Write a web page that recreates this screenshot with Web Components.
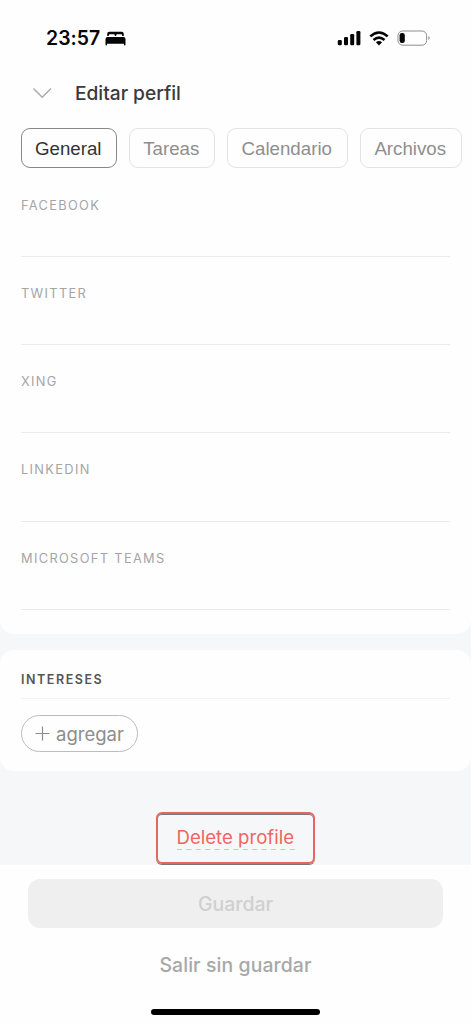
<!DOCTYPE html>
<html lang="es"><head><meta charset="utf-8"><title>Editar perfil</title>
<style>html,body{margin:0;height:100%;background:#fefefe}body{font-family:Inter,"Liberation Sans",sans-serif;overflow:hidden}</style></head>
<body><profile-page></profile-page>
<script>
const define = (name, html) => customElements.define(name, class extends HTMLElement {
  constructor(){ super(); const t=document.createElement('template'); t.innerHTML=html; this.attachShadow({mode:'open'}).append(t.content.cloneNode(true)); }
});

define('status-bar', `<style>
:host{display:flex;height:68px;box-sizing:border-box;padding:26px 40px 0 46px;justify-content:space-between;color:#050505}
.left{display:flex;gap:5px;height:24px}
.time{font-size:19.4px;font-weight:600;line-height:24px;letter-spacing:.05px}
svg{display:block}
.bed{margin-top:5px}
</style>
<div class="left"><span class="time">23:57</span>
<svg class="bed" width="21" height="15" viewBox="0 0 21 15"><path fill="currentColor" d="M2.2 5V2.9Q2.2 .8 4.4 .8H16.6Q18.8 .8 18.8 2.9V5H17.2V4.2Q17.2 3.2 16.2 3.2H12.2Q11.2 3.2 11.2 4.2V5H9.8V4.2Q9.8 3.2 8.8 3.2H4.8Q3.8 3.2 3.8 4.2V5ZM2.5 6H18.5Q20.5 6 20.5 8.2V13.7Q20.5 14.4 19.7 14.4Q19 14.4 19 13.7V12.8H2V13.7Q2 14.4 1.3 14.4Q.5 14.4 .5 13.7V8.2Q.5 6 2.5 6Z"/></svg></div>
<svg width="94" height="24" viewBox="0 0 94 24"><g fill="currentColor"><rect x=".8" y="14" width="4" height="5.2" rx="1.2"/><rect x="7" y="11" width="4" height="8.2" rx="1.2"/><rect x="13.2" y="8" width="4" height="11.2" rx="1.2"/><rect x="19.4" y="5" width="4" height="14.2" rx="1.2"/><path d="M42 19.4 38.9 16.3Q42 13.7 45.1 16.3Z"/><rect x="62.6" y="7" width="5.2" height="10" rx="2.3"/></g>
<g fill="none" stroke="currentColor" stroke-width="2.6"><path d="M33.3 10.4Q42 2.6 50.7 10.4"/><path d="M36.5 14Q42 9.2 47.5 14"/></g>
<rect x="61" y="5" width="28.6" height="14.2" rx="4.6" fill="none" stroke="#8d8d8d"/><path d="M91.4 10Q94.1 12 91.4 14Z" fill="#8d8d8d"/></svg>`);

define('page-header', `<style>
:host{display:flex;align-items:center;height:48px;padding-left:32px;color:#3a3a3a}
svg{display:block;width:20px;height:12px;margin-right:23px;margin-top:1px}
h1{margin:0;padding-top:1px;font-size:19.2px;line-height:24px;font-weight:500;letter-spacing:-.03px}
</style><svg viewBox="0 0 20 12"><path d="M1.5 1.5 10.2 10.3 19 1.5" fill="none" stroke="#aaa" stroke-width="1.5"/></svg><h1><slot></slot></h1>`);

define('tab-chip', `<style>
:host{display:flex;box-sizing:border-box;align-items:center;justify-content:center;flex:none;height:40px;padding:1px 1.5px 0 0;border:1.5px solid #e3e3e3;border-radius:9px;font:18.7px/24px "Liberation Sans",Arial,sans-serif;color:#8e8e8e;white-space:nowrap}
:host([active]){border-color:#888;color:#333}
</style><slot></slot>`);

define('tab-strip', `<style>
:host{display:flex;gap:12px;padding:12px 0 0 21px}
.a{width:96px}.b{width:86px}.c{width:121px}.d{width:102px}
</style><tab-chip class="a" active>General</tab-chip><tab-chip class="b">Tareas</tab-chip><tab-chip class="c">Calendario</tab-chip><tab-chip class="d">Archivos</tab-chip>`);

define('form-field', `<style>
:host{display:block;box-sizing:border-box;height:88.25px;padding-top:29px;border-bottom:1px solid #ebebeb;font-size:12.8px;line-height:16px;letter-spacing:1.35px;color:#a5a5a5}
</style><slot></slot>`);

define('social-card', `<style>
:host{display:block;box-sizing:border-box;height:633.5px;background:#fefefe;border-radius:0 0 14px 14px}
.fields{margin:0 21px;margin-top:.5px}
</style><status-bar></status-bar><page-header>Editar perfil</page-header><tab-strip></tab-strip>
<div class="fields"><form-field>FACEBOOK</form-field><form-field>TWITTER</form-field><form-field>XING</form-field><form-field>LINKEDIN</form-field><form-field>MICROSOFT TEAMS</form-field></div>`);

define('interest-card', `<style>
:host{display:block;box-sizing:border-box;height:120.5px;padding:21.5px 21px 0;background:#fefefe;border-radius:14px}
h2{margin:0;height:26px;font-size:12.5px;line-height:16px;font-weight:600;letter-spacing:1.55px;color:#555;border-bottom:1px solid #f3f3f3}
.add{display:flex;box-sizing:border-box;align-items:center;width:117px;height:37px;margin-top:16.5px;padding-left:13px;border:1px solid #bcbcbc;border-radius:19px;font-size:18.5px;line-height:24px;color:#8d8d8d}
svg{width:15px;height:15px;margin-right:6px}
</style><h2>INTERESES</h2><div class="add"><svg viewBox="0 0 15 15"><path d="M7.5.5V14.5M.5 7.5H14.5" stroke="#8d8d8d" stroke-width="1.2"/></svg><span>agregar</span></div>`);

define('delete-action', `<style>
:host{display:flex;box-sizing:border-box;width:159px;height:52px;border:2px solid #e8645f;border-radius:6px;justify-content:center;padding-top:11px;box-shadow:0 1px 0 #777,inset 0 1px 0 #777;position:relative;z-index:1}
.text{height:24px;font-size:18.6px;line-height:25px;color:#f2645f;white-space:nowrap}
svg{display:block;width:118px;height:2px}
</style><div><div class="text"><slot></slot></div><svg viewBox="0 0 118 2"><path d="M0 .5H118" stroke="#f6b5b5" stroke-width="1" stroke-dasharray="5 4.4"/></svg></div>`);

define('action-footer', `<style>
:host{display:flex;flex-direction:column;align-items:center;height:159px;box-sizing:border-box;padding-top:14px;background:#fefefe}
.save{width:415px;height:49px;border-radius:12px;background:#efefef;color:#d0d0d0;font-size:19.5px;font-weight:500;line-height:50px;text-align:center}
.exit{margin-top:25px;font-size:19.4px;line-height:24px;color:#a8a8a8;font-weight:500;letter-spacing:.1px}
.home{width:169px;height:6px;border-radius:3px;background:#000;margin-top:31.5px}
</style><div class="save">Guardar</div><div class="exit">Salir sin guardar</div><div class="home"></div>`);

define('profile-page', `<style>
:host{display:flex;flex-direction:column;width:471px;height:1024px;background:#f6f7f9}
interest-card{margin-top:16.5px}
.danger{display:flex;align-items:flex-start;height:94.5px;box-sizing:border-box;padding:41.5px 0 0 156px}
</style><social-card></social-card><interest-card></interest-card><div class="danger"><delete-action>Delete profile</delete-action></div><action-footer></action-footer>`);
</script></body></html>
